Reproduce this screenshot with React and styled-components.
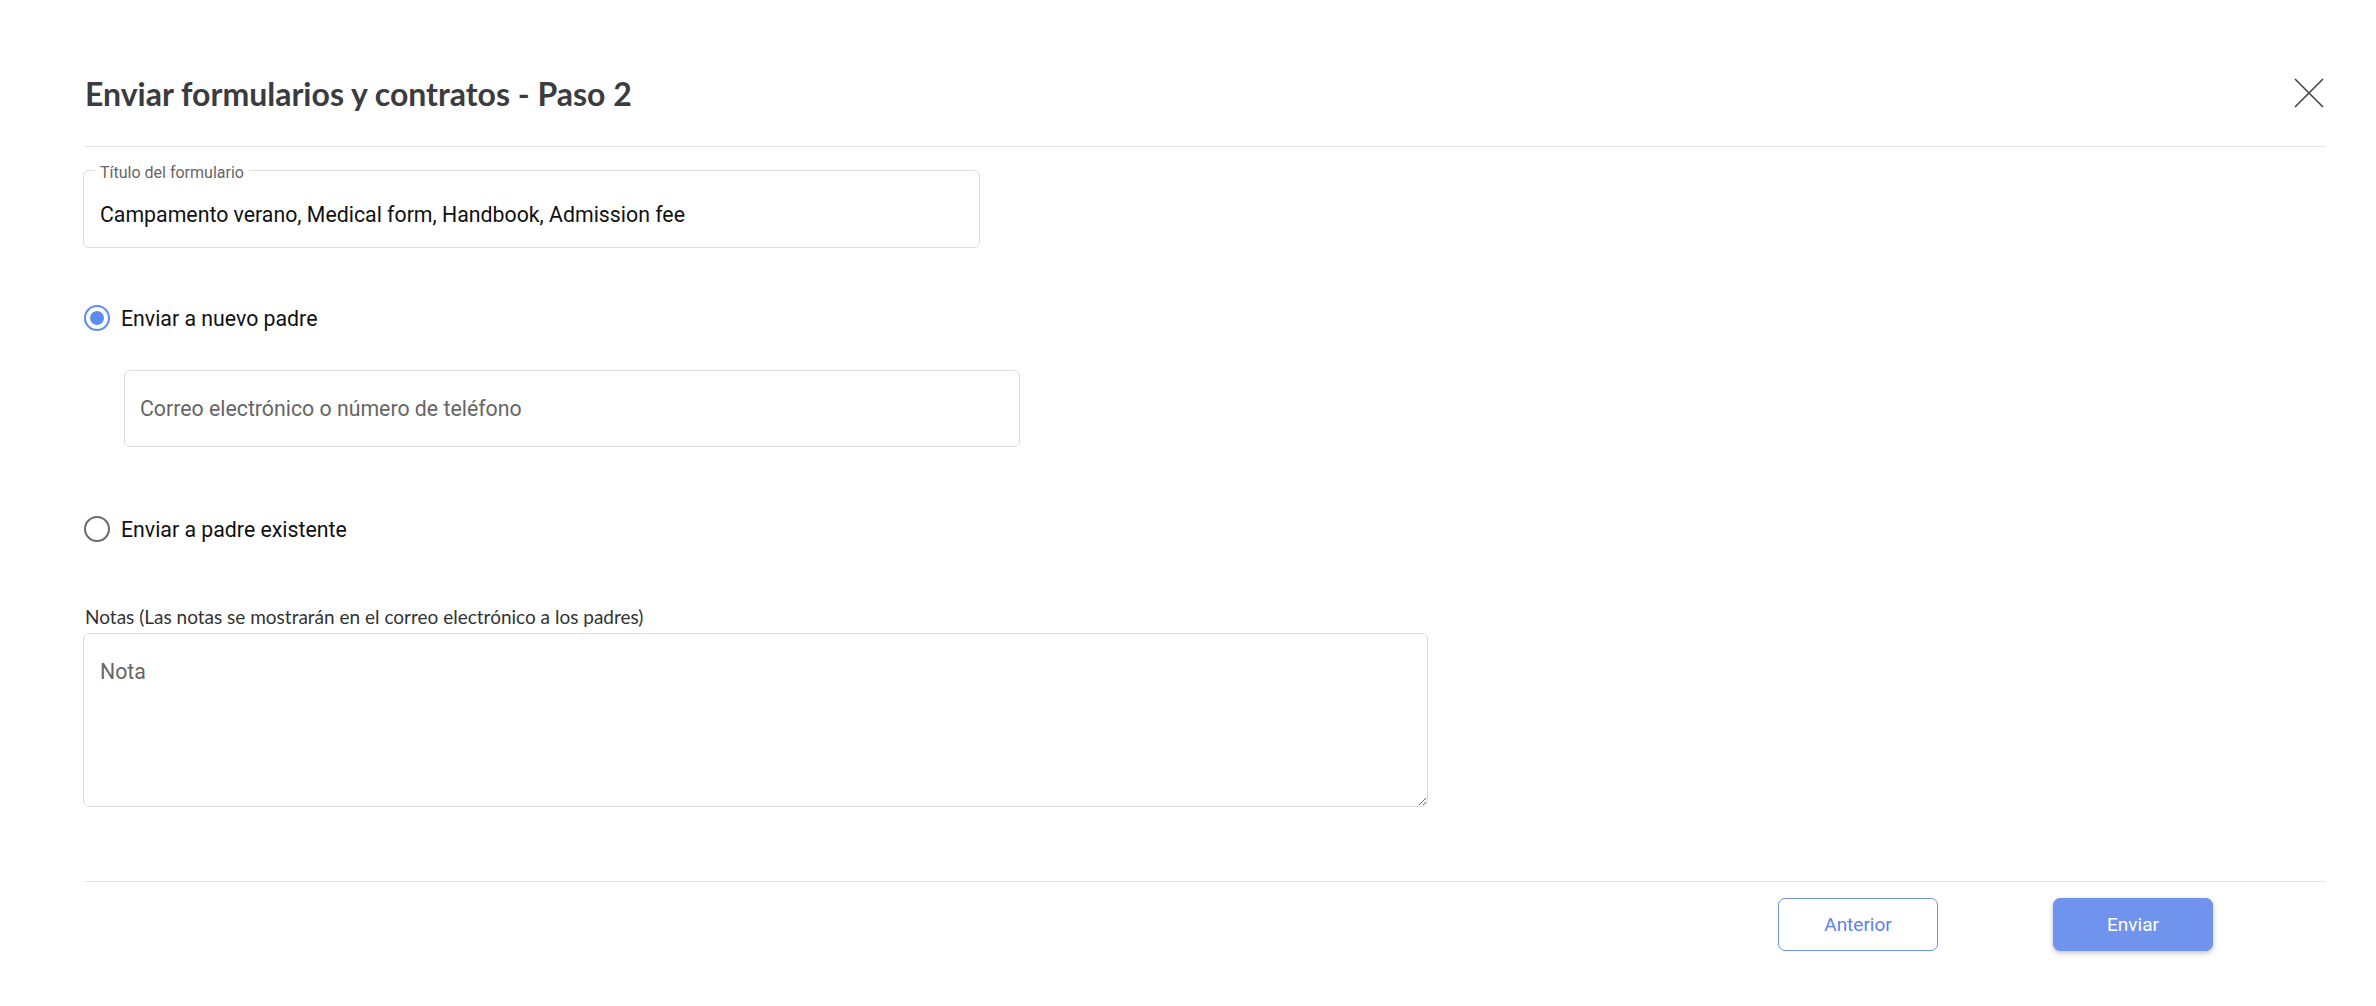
import React from 'react';
import styled, { createGlobalStyle } from 'styled-components';

const GlobalStyle = createGlobalStyle`
  body {
    margin: 0;
    background: #ffffff;
    font-family: Roboto, "Liberation Sans", sans-serif;
  }
`;

const Page = styled.div`
  padding: 0 50px 0 85px;
  min-height: 1006px;
  box-sizing: border-box;
`;

const Header = styled.div`
  display: flex;
  align-items: center;
  justify-content: space-between;
  height: 147px;
  padding-top: 40px;
  box-sizing: border-box;
  border-bottom: 1px solid #e2e2e2;
`;

const Title = styled.h1`
  margin: 0;
  font-family: Lato, "Liberation Sans", sans-serif;
  font-weight: 700;
  font-size: 32px;
  color: #3b3b40;
`;

const CloseButton = styled.button`
  border: none;
  background: none;
  padding: 0;
  width: 32px;
  height: 32px;
  margin-right: 1px;
  cursor: pointer;
  display: flex;
  align-items: center;
  justify-content: center;
`;

const Body = styled.div`
  display: flex;
  flex-direction: column;
  align-items: flex-start;
`;

const OutlinedField = styled.div`
  position: relative;
  margin-top: 23px;
  margin-left: -2px;
  width: 897px;
  height: 78px;
  box-sizing: border-box;
  border: 1px solid #dcdcdc;
  border-radius: 6px;
  display: flex;
  align-items: center;
  padding: 10px 16px 0;
  font-size: 21.3px;
  color: #111;
`;

const FloatLabel = styled.span`
  position: absolute;
  top: -7px;
  left: 11px;
  padding: 0 5px;
  background: #fff;
  font-size: 16px;
  line-height: 18px;
  color: #666;
`;

const RadioRow = styled.label`
  display: flex;
  align-items: center;
  gap: 11px;
  height: 30px;
  margin-top: ${p => p.$top}px;
  margin-left: -1px;
  font-size: 21.3px;
  color: #111;
  cursor: pointer;
`;

const RadioDot = styled.span`
  width: 26px;
  height: 26px;
  box-sizing: border-box;
  border-radius: 50%;
  border: 2px solid ${p => (p.$checked ? '#5b8def' : '#6b6b6b')};
  display: flex;
  align-items: center;
  justify-content: center;
  &::after {
    content: '';
    width: 14px;
    height: 14px;
    border-radius: 50%;
    background: ${p => (p.$checked ? '#5b8def' : 'transparent')};
  }
`;

const TextInput = styled.input`
  margin-top: 37px;
  margin-left: 39px;
  width: 896px;
  height: 77px;
  box-sizing: border-box;
  border: 1px solid #dcdcdc;
  border-radius: 6px;
  padding: 0 15px;
  font-family: Roboto, "Liberation Sans", sans-serif;
  font-size: 21.3px;
  color: #111;
  outline: none;
  &::placeholder {
    color: #666;
  }
`;

const NotesLabel = styled.div`
  margin-top: 63px;
  font-family: Lato, "Liberation Sans", sans-serif;
  font-size: 19px;
  line-height: 20px;
  color: #333;
`;

const NotesArea = styled.textarea`
  margin-top: 6px;
  margin-left: -2px;
  width: 1345px;
  height: 174px;
  box-sizing: border-box;
  border: 1px solid #dcdcdc;
  border-radius: 6px;
  padding: 25px 16px;
  font-family: Roboto, "Liberation Sans", sans-serif;
  font-size: 21.3px;
  color: #111;
  outline: none;
  &::placeholder {
    color: #666;
  }
`;

const Footer = styled.div`
  margin-top: 74px;
  border-top: 1px solid #e2e2e2;
  padding: 16px 113px 0 0;
  display: flex;
  justify-content: flex-end;
  gap: 115px;
`;

const Button = styled.button`
  width: 160px;
  height: 53px;
  box-sizing: border-box;
  border-radius: 7px;
  font-family: Roboto, "Liberation Sans", sans-serif;
  font-size: 19px;
  cursor: pointer;
  border: 1px solid ${p => (p.$primary ? '#7094ee' : '#6f91ef')};
  background: ${p => (p.$primary ? '#7094ee' : '#fff')};
  color: ${p => (p.$primary ? '#fff' : '#5b82ec')};
  box-shadow: ${p => (p.$primary ? '0 2px 5px rgba(0,0,0,0.25)' : 'none')};
`;

export default function App() {
  return (
    <>
      <GlobalStyle />
      <Page>
        <Header>
          <Title>Enviar formularios y contratos - Paso 2</Title>
          <CloseButton aria-label="Cerrar">
            <svg width="30" height="30" viewBox="0 0 30 30">
              <path d="M1 1 L29 29 M29 1 L1 29" stroke="#444" strokeWidth="1.6" />
            </svg>
          </CloseButton>
        </Header>
        <Body>
          <OutlinedField>
            <FloatLabel>Título del formulario</FloatLabel>
            Campamento verano, Medical form, Handbook, Admission fee
          </OutlinedField>
          <RadioRow $top={55}>
            <RadioDot $checked />
            Enviar a nuevo padre
          </RadioRow>
          <TextInput placeholder="Correo electrónico o número de teléfono" />
          <RadioRow $top={67}>
            <RadioDot />
            Enviar a padre existente
          </RadioRow>
          <NotesLabel>Notas (Las notas se mostrarán en el correo electrónico a los padres)</NotesLabel>
          <NotesArea placeholder="Nota" />
        </Body>
        <Footer>
          <Button>Anterior</Button>
          <Button $primary>Enviar</Button>
        </Footer>
      </Page>
    </>
  );
}
